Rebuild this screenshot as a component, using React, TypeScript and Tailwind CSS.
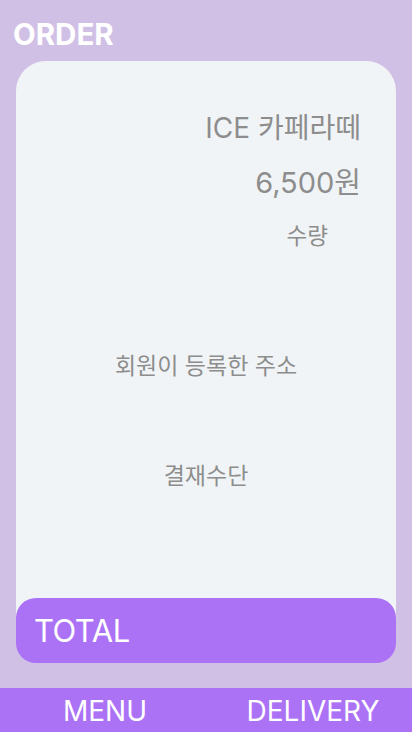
import React from "react";

const font = { fontFamily: '"Inter", "Noto Sans CJK KR", sans-serif' };

export default function App() {
  return (
    <div
      className="w-full h-[732px] bg-[#d1c0e6] flex flex-col overflow-hidden"
      style={font}
    >
      <div className="h-[61px] pt-[17px] px-[13px] shrink-0">
        <div className="text-[29.5px] leading-[34px] font-bold text-white">ORDER</div>
      </div>

      <div className="flex-1 mx-4 bg-[#f1f4f6] rounded-[30px] flex flex-col">
        <div className="pt-[51px] pr-[35px] flex flex-col items-end text-[#8d8d8d]">
          <div className="text-[28px] leading-[32px]">ICE 카페라떼</div>
          <div className="mt-[23px] text-[29px] leading-[32px]">6,500원</div>
          <div className="mt-[23px] mr-[33px] text-[22.5px] leading-[28px]">수량</div>
        </div>
        <div className="mt-[101px] text-center text-[23px] leading-[30px] text-[#8d8d8d]">
          회원이 등록한 주소
        </div>
        <div className="mt-[80px] text-center text-[23px] leading-[30px] text-[#8d8d8d]">
          결재수단
        </div>
        <div className="flex-1" />
        <div className="h-[65px] bg-[#ab72f6] rounded-[20px] flex items-center px-[18px]">
          <span className="text-[31px] leading-[40px] text-white tracking-[-0.5px]">TOTAL</span>
        </div>
      </div>

      <div className="h-[25px] shrink-0" />

      <div className="h-[44px] shrink-0 bg-[#ab72f6] grid grid-cols-2 items-center">
        <div className="text-center text-white text-[28px] leading-[34px] pt-[2px] pl-[4px]">MENU</div>
        <div className="text-center text-white text-[28px] leading-[34px] pt-[2px] pl-[8px]">
          DELIVERY
        </div>
      </div>
    </div>
  );
}
